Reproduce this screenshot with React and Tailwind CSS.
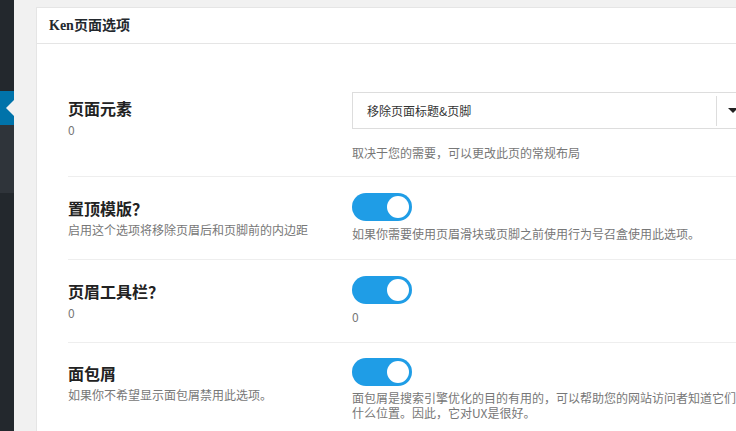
import React from "react";

const cjk = "font-['Noto_Sans_CJK_SC','Noto_Sans',sans-serif]";

function Toggle() {
  return (
    <div className="w-[60px] h-[28px] rounded-full bg-[#1f9de6] flex items-center justify-end pr-[3px]">
      <div className="w-[22px] h-[22px] rounded-full bg-white" />
    </div>
  );
}

function Row({ label, sub, right, first, pt = "pt-[16px]", pb = "pb-[17px]", lpt = "pt-[5px]" }) {
  return (
    <div className={`flex ${first ? "" : "border-t border-[#eeeeee]"} ${pt} ${pb}`}>
      <div className={`w-[284px] shrink-0 ${lpt}`}>
        <div className="text-[16px] leading-[20px] font-bold text-[#222]">{label}</div>
        <div className="mt-[3px] text-[12px] leading-[18px] text-[#777]">{sub}</div>
      </div>
      <div className="w-[400px] shrink-0">{right}</div>
    </div>
  );
}

export default function App() {
  return (
    <div className={`w-[736px] h-[431px] overflow-hidden flex bg-[#f1f1f1] ${cjk}`}>
      <div className="w-[14px] shrink-0 flex flex-col">
        <div className="h-[91px] bg-[#23282d]" />
        <div className="h-[34px] bg-[#0073aa] flex items-center justify-end">
          <div className="w-0 h-0 border-y-[8px] border-y-transparent border-r-[8px] border-r-[#f1f1f1]" />
        </div>
        <div className="h-[68px] bg-[#2f343a]" />
        <div className="flex-1 bg-[#23282d]" />
      </div>
      <div className="pl-[22px] pt-[7px] shrink-0">
        <div className="w-[760px] h-[600px] bg-white border border-[#e5e5e5]">
          <div className="h-[36px] border-b border-[#e5e5e5] flex items-center pl-[12px]">
            <span className="text-[14px] font-bold text-[#23282d] font-['Liberation_Serif','Noto_Sans_CJK_SC',serif]">Ken页面选项</span>
          </div>
          <div className="pl-[31px]">
            <Row
              first
              pt="pt-[48px]"
              pb="pb-[14px]"
              lpt="pt-[6px]"
              label="页面元素"
              sub="0"
              right={
                <div>
                  <div className="h-[37px] border border-[#dddddd] flex items-center">
                    <div className="flex-1 pl-[14px] text-[12px] text-[#333]">移除页面标题&amp;页脚</div>
                    <div className="w-[35px] h-[30px] border-l border-[#dddddd] flex items-center pl-[11px]">
                      <div className="w-0 h-0 border-x-[5px] border-x-transparent border-t-[5px] border-t-[#222]" />
                    </div>
                  </div>
                  <div className="mt-[15px] text-[12px] leading-[18px] text-[#777]">取决于您的需要，可以更改此页的常规布局</div>
                </div>
              }
            />
            <Row
              label="置顶模版？"
              sub="启用这个选项将移除页眉后和页脚前的内边距"
              right={
                <div>
                  <Toggle />
                  <div className="mt-[5px] text-[12px] leading-[16px] text-[#777]">如果你需要使用页眉滑块或页脚之前使用行为号召盒使用此选项。</div>
                </div>
              }
            />
            <Row
              label="页眉工具栏？"
              sub="0"
              right={
                <div>
                  <Toggle />
                  <div className="mt-[5px] text-[12px] leading-[16px] text-[#777]">0</div>
                </div>
              }
            />
            <Row
              label="面包屑"
              sub="如果你不希望显示面包屑禁用此选项。"
              pt="pt-[15px]"
              right={
                <div>
                  <Toggle />
                  <div className="mt-[4px] text-[12px] leading-[15px] text-[#777]">面包屑是搜索引擎优化的目的有用的，可以帮助您的网站访问者知道它们在什么位置。因此，它对UX是很好。</div>
                </div>
              }
            />
          </div>
        </div>
      </div>
    </div>
  );
}
